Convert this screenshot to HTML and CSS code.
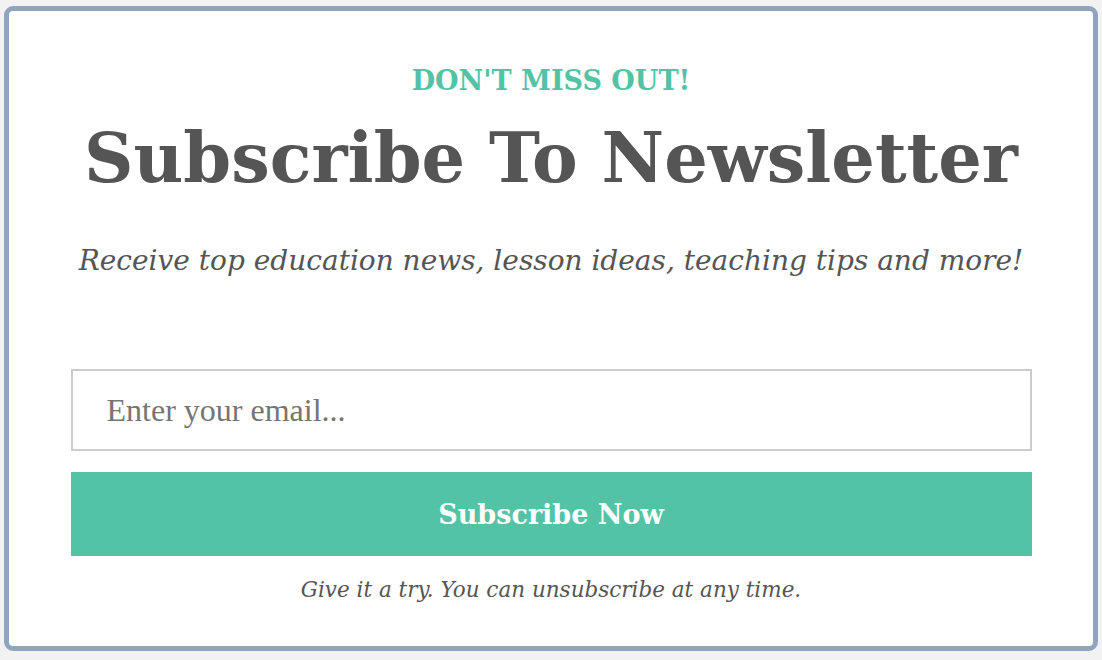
FILE: index.html
```html
<!DOCTYPE html>
<html lang="en">
<head>
<meta charset="utf-8">
<title>Subscribe To Newsletter</title>
<link rel="stylesheet" href="styles.css">
</head>
<body>
<section class="card">
  <p class="eyebrow">DON'T MISS OUT!</p>
  <h1 class="title">Subscribe To Newsletter</h1>
  <p class="lead">Receive top education news, lesson ideas, teaching tips and more!</p>
  <form class="form">
    <input class="email" type="email" placeholder="Enter your email...">
    <button class="submit" type="button">Subscribe Now</button>
  </form>
  <p class="note">Give it a try. You can unsubscribe at any time.</p>
</section>
</body>
</html>
```
FILE: styles.css
```css
html, body {
  margin: 0;
  padding: 0;
  background: #f2f2f2;
}
body {
  padding: 6px 4px 9px 4px;
  font-family: "DejaVu Serif", "Liberation Serif", serif;
  color: #555555;
}
.card {
  box-sizing: border-box;
  width: 1094px;
  background: #ffffff;
  border: 5px solid #8fa5bd;
  border-radius: 9px;
  padding: 55px 0 43px 0;
  display: flex;
  flex-direction: column;
  align-items: center;
  text-align: center;
}
.eyebrow {
  margin: 0;
  font-size: 27px;
  line-height: 30px;
  font-weight: bold;
  color: #52c3a5;
}
.title {
  margin: 22px 0 0 0;
  font-size: 68.5px;
  line-height: 80px;
  font-weight: bold;
  color: #555555;
}
.lead {
  margin: 46px 0 0 0;
  font-size: 28px;
  line-height: 34px;
  font-style: italic;
}
.form {
  margin: 91px 0 0 0;
  width: 961px;
  display: flex;
  flex-direction: column;
  gap: 21px;
}
.email {
  box-sizing: border-box;
  height: 82px;
  width: 100%;
  border: 2px solid #cccccc;
  padding: 0 34px;
  font-family: "Liberation Serif", serif;
  font-size: 32px;
  color: #555555;
  background: #fff;
  outline: none;
}
.email::placeholder {
  color: #757575;
}
.submit {
  display: block;
  height: 84px;
  width: 100%;
  border: none;
  background: #53c3a6;
  color: #ffffff;
  font-family: "DejaVu Serif", "Liberation Serif", serif;
  font-weight: bold;
  font-size: 27px;
  cursor: pointer;
}
.note {
  margin: 21px 0 0 0;
  font-size: 21.5px;
  line-height: 26px;
  font-style: italic;
}
```
